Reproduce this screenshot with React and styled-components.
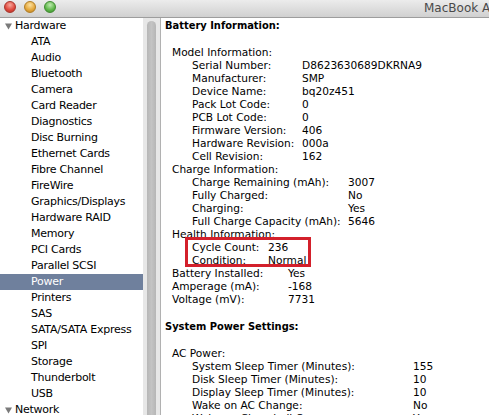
import React from 'react';
import styled, { createGlobalStyle } from 'styled-components';

const GlobalStyle = createGlobalStyle`
  html, body {
    margin: 0;
    padding: 0;
    background: #fff;
  }
  body {
    font-family: "DejaVu Sans", "Liberation Sans", sans-serif;
    color: #000;
  }
`;

// Window chrome
const Window = styled.div`
  width: 489px;
  height: 415px;
  display: flex;
  flex-direction: column;
  overflow: hidden;
  background: #fff;
`;

const TitleBar = styled.div`
  height: 16px;
  flex: none;
  display: flex;
  align-items: flex-start;
  padding: 1px 0 0 4px;
  background: linear-gradient(#ececec, #d0d0d0);
  border-bottom: 1px solid #9d9d9d;
`;

const Lights = styled.div`
  display: flex;
  gap: 8px;
  flex: none;
`;

const lightColors = {
  red: ['#f7a79c', '#de463b', '#a8342b'],
  yellow: ['#fbe1a0', '#e4a63a', '#b07d25'],
  green: ['#bfeab0', '#5db648', '#3f8a30'],
};

const Light = styled.span`
  width: 12px;
  height: 12px;
  border-radius: 50%;
  box-sizing: border-box;
  border: 1px solid ${(p) => lightColors[p.$color][2]};
  background: radial-gradient(
    circle at 50% 30%,
    ${(p) => lightColors[p.$color][0]} 0%,
    ${(p) => lightColors[p.$color][1]} 60%,
    ${(p) => lightColors[p.$color][2]} 100%
  );
`;

const WindowTitle = styled.div`
  flex: none;
  margin-left: 368px;
  font-size: 12px;
  line-height: 14px;
  color: #4a4a4a;
  white-space: nowrap;
`;

const Body = styled.div`
  flex: 1;
  min-height: 0;
  display: flex;
`;

// Sidebar
const Sidebar = styled.div`
  width: 143px;
  flex: none;
  overflow: hidden;
  font-size: 11px;
  letter-spacing: -0.25px;
`;

const GroupRow = styled.div`
  height: 16px;
  line-height: 16px;
  display: flex;
  align-items: center;
  padding-left: 5px;
  white-space: nowrap;
`;

const Disclosure = styled.svg`
  width: 7px;
  height: 7px;
  margin-right: 3px;
  flex: none;
`;

const ItemRow = styled.div`
  height: 16px;
  line-height: 16px;
  padding-left: 31px;
  white-space: nowrap;
  background: ${(p) => (p.$selected ? '#6f809d' : 'transparent')};
  color: ${(p) => (p.$selected ? '#fff' : '#000')};
`;

const ScrollTrack = styled.div`
  width: 17px;
  flex: none;
  box-sizing: border-box;
  padding: 3px 4px 0 4px;
  background: #e7e7e7;
  display: flex;
  overflow: hidden;
`;

const ScrollThumb = styled.div`
  flex: 1;
  border-radius: 5px 5px 0 0;
  background: linear-gradient(90deg, #b6b6b6, #c4c4c4 50%, #b6b6b6);
`;

// Content
const Content = styled.div`
  flex: 1;
  min-width: 0;
  border-left: 1px solid #b1b1b1;
  padding: 1px 0 0 4px;
  overflow: hidden;
  font-size: 10.6px;
  line-height: 13px;
  white-space: nowrap;
`;

const SectionTitle = styled.div`
  font-family: "DejaVu Sans Condensed", "DejaVu Sans", sans-serif;
  font-stretch: condensed;
  font-weight: bold;
  font-size: 11px;
  height: 13px;
  margin-top: ${(p) => p.$gapTop || 0}px;
  margin-bottom: 14px;
`;

const Row = styled.div`
  display: flex;
  height: 13px;
  padding-left: ${(p) => p.$indent}px;
`;

const Label = styled.span`
  flex: none;
  width: ${(p) => (p.$width ? `${p.$width}px` : 'auto')};
`;

// red annotation drawn over the health rows
const Highlight = styled.div`
  position: relative;

  &::after {
    content: '';
    position: absolute;
    top: -4px;
    left: 20px;
    width: 126px;
    bottom: 0;
    box-sizing: border-box;
    border: 3px solid #d3202b;
    pointer-events: none;
  }
`;

const hardware = [
  'ATA', 'Audio', 'Bluetooth', 'Camera', 'Card Reader', 'Diagnostics',
  'Disc Burning', 'Ethernet Cards', 'Fibre Channel', 'FireWire',
  'Graphics/Displays', 'Hardware RAID', 'Memory', 'PCI Cards',
  'Parallel SCSI', 'Power', 'Printers', 'SAS', 'SATA/SATA Express',
  'SPI', 'Storage', 'Thunderbolt', 'USB',
];

const modelInfo = [
  ['Serial Number:', 'D8623630689DKRNA9'],
  ['Manufacturer:', 'SMP'],
  ['Device Name:', 'bq20z451'],
  ['Pack Lot Code:', '0'],
  ['PCB Lot Code:', '0'],
  ['Firmware Version:', '406'],
  ['Hardware Revision:', '000a'],
  ['Cell Revision:', '162'],
];

const chargeInfo = [
  ['Charge Remaining (mAh):', '3007'],
  ['Fully Charged:', 'No'],
  ['Charging:', 'Yes'],
  ['Full Charge Capacity (mAh):', '5646'],
];

const healthInfo = [
  ['Cycle Count:', '236'],
  ['Condition:', 'Normal'],
];

const batteryMisc = [
  ['Battery Installed:', 'Yes'],
  ['Amperage (mA):', '-168'],
  ['Voltage (mV):', '7731'],
];

const acPower = [
  ['System Sleep Timer (Minutes):', '155'],
  ['Disk Sleep Timer (Minutes):', '10'],
  ['Display Sleep Timer (Minutes):', '10'],
  ['Wake on AC Change:', 'No'],
  ['Wake on Clamshell Open:', 'Yes'],
  ['Wake on LAN:', 'Yes'],
];

const Fields = ({ rows, indent = 27, width }) =>
  rows.map(([label, value]) => (
    <Row key={label} $indent={indent}>
      <Label $width={width}>{label}</Label>
      <span>{value}</span>
    </Row>
  ));

const Triangle = () => (
  <Disclosure viewBox="0 0 7 7">
    <polygon points="0,0.5 7,0.5 3.5,6.5" fill="#7a7a7a" />
  </Disclosure>
);

const App = () => (
  <>
    <GlobalStyle />
    <Window>
      <TitleBar>
        <Lights>
          <Light $color="red" />
          <Light $color="yellow" />
          <Light $color="green" />
        </Lights>
        <WindowTitle>MacBook Air</WindowTitle>
      </TitleBar>
      <Body>
        <Sidebar>
          <GroupRow><Triangle />Hardware</GroupRow>
          {hardware.map((item) => (
            <ItemRow key={item} $selected={item === 'Power'}>{item}</ItemRow>
          ))}
          <GroupRow><Triangle />Network</GroupRow>
        </Sidebar>
        <ScrollTrack>
          <ScrollThumb />
        </ScrollTrack>
        <Content>
          <SectionTitle>Battery Information:</SectionTitle>
          <Row $indent={7}>Model Information:</Row>
          <Fields rows={modelInfo} width={110} />
          <Row $indent={7}>Charge Information:</Row>
          <Fields rows={chargeInfo} width={156} />
          <Row $indent={7}>Health Information:</Row>
          <Highlight>
            <Fields rows={healthInfo} width={76} />
          </Highlight>
          <Fields rows={batteryMisc} indent={7} width={116} />

          <SectionTitle $gapTop={14}>System Power Settings:</SectionTitle>
          <Row $indent={7}>AC Power:</Row>
          <Fields rows={acPower} width={221} />
        </Content>
      </Body>
    </Window>
  </>
);

export default App;
